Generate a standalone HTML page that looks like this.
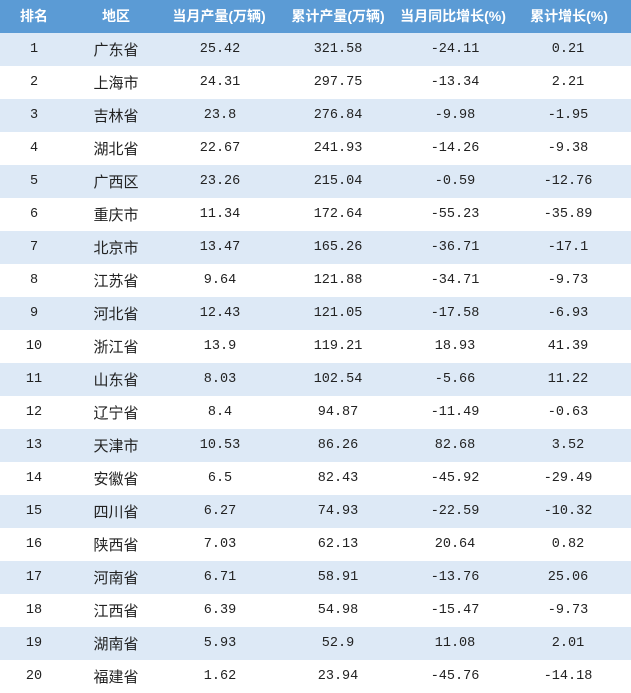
<!DOCTYPE html>
<html><head><meta charset="utf-8">
<style>
body{margin:0;width:631px;height:693px;overflow:hidden;background:#fff;font-family:"Liberation Mono","Noto Serif CJK SC",monospace;}
.r{position:absolute;left:0;width:631px;height:33px;}
.h{top:0;height:33px;background:#5b9bd5;color:#fff;font-family:"Liberation Sans","Noto Sans CJK SC",sans-serif;font-weight:bold;font-size:14px;}
.c{position:absolute;top:0;line-height:33px;transform:translateX(-50%);white-space:nowrap;}
.o{background:#dde9f6;}
.d{font-size:13.5px;color:#222;}
.d .z{font-family:"Noto Sans CJK SC",sans-serif;font-size:15px;}
</style></head><body>
<div class="r h">
<span class="c" style="left:34px">排名</span>
<span class="c" style="left:116px">地区</span>
<span class="c" style="left:219px">当月产量(万辆)</span>
<span class="c" style="left:338px">累计产量(万辆)</span>
<span class="c" style="left:453px">当月同比增长(%)</span>
<span class="c" style="left:569px">累计增长(%)</span>
</div>
<div id="t"></div>
<script>
var d=[["广东省","25.42","321.58","-24.11","0.21"],["上海市","24.31","297.75","-13.34","2.21"],["吉林省","23.8","276.84","-9.98","-1.95"],["湖北省","22.67","241.93","-14.26","-9.38"],["广西区","23.26","215.04","-0.59","-12.76"],["重庆市","11.34","172.64","-55.23","-35.89"],["北京市","13.47","165.26","-36.71","-17.1"],["江苏省","9.64","121.88","-34.71","-9.73"],["河北省","12.43","121.05","-17.58","-6.93"],["浙江省","13.9","119.21","18.93","41.39"],["山东省","8.03","102.54","-5.66","11.22"],["辽宁省","8.4","94.87","-11.49","-0.63"],["天津市","10.53","86.26","82.68","3.52"],["安徽省","6.5","82.43","-45.92","-29.49"],["四川省","6.27","74.93","-22.59","-10.32"],["陕西省","7.03","62.13","20.64","0.82"],["河南省","6.71","58.91","-13.76","25.06"],["江西省","6.39","54.98","-15.47","-9.73"],["湖南省","5.93","52.9","11.08","2.01"],["福建省","1.62","23.94","-45.76","-14.18"]];
var h="";
for(var i=0;i<20;i++){var r=d[i];
h+='<div class="r d'+(i%2==0?' o':'')+'" style="top:'+(33+i*33)+'px">'+
'<span class="c" style="left:34px">'+(i+1)+'</span>'+
'<span class="c z" style="left:116px">'+r[0]+'</span>'+
'<span class="c" style="left:220px">'+r[1]+'</span>'+
'<span class="c" style="left:338px">'+r[2]+'</span>'+
'<span class="c" style="left:455px">'+r[3]+'</span>'+
'<span class="c" style="left:568px">'+r[4]+'</span></div>';}
document.getElementById("t").innerHTML=h;
</script>
</body></html>
